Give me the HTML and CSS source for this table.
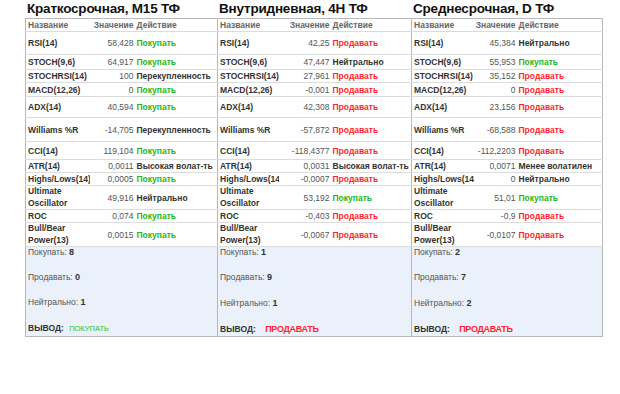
FILE: index.html
```html
<!DOCTYPE html>
<html lang="ru">
<head>
<meta charset="utf-8">
<link rel="stylesheet" href="styles.css">
</head>
<body>
<div class="board">
  <section class="panel p1">
    <h2 class="title">Краткосрочная, M15 ТФ</h2>
    <table class="tbl">
      <colgroup><col class="c-name"><col class="c-val"><col class="c-act"></colgroup>
      <tr class="hd"><th class="n">Название</th><th class="v">Значение</th><th class="a">Действие</th></tr>
      <tr class="r1"><td class="n">RSI(14)</td><td class="v">58,428</td><td class="a buy">Покупать</td></tr>
      <tr class="r2"><td class="n">STOCH(9,6)</td><td class="v">64,917</td><td class="a buy">Покупать</td></tr>
      <tr class="r3"><td class="n">STOCHRSI(14)</td><td class="v">100</td><td class="a neu">Перекупленность</td></tr>
      <tr class="r4"><td class="n">MACD(12,26)</td><td class="v">0</td><td class="a buy">Покупать</td></tr>
      <tr class="r5"><td class="n">ADX(14)</td><td class="v">40,594</td><td class="a buy">Покупать</td></tr>
      <tr class="r6"><td class="n">Williams %R</td><td class="v">-14,705</td><td class="a neu">Перекупленность</td></tr>
      <tr class="r7"><td class="n">CCI(14)</td><td class="v">119,104</td><td class="a buy">Покупать</td></tr>
      <tr class="r8"><td class="n">ATR(14)</td><td class="v">0,0011</td><td class="a neu">Высокая волат-ть</td></tr>
      <tr class="r9"><td class="n">Highs/Lows(14)</td><td class="v">0,0005</td><td class="a buy">Покупать</td></tr>
      <tr class="r10"><td class="n two">Ultimate Oscillator</td><td class="v">49,916</td><td class="a neu">Нейтрально</td></tr>
      <tr class="r11"><td class="n">ROC</td><td class="v">0,074</td><td class="a buy">Покупать</td></tr>
      <tr class="r12"><td class="n two">Bull/Bear Power(13)</td><td class="v">0,0015</td><td class="a buy">Покупать</td></tr>
      <tr class="sum"><td colspan="3">
        <div class="sum-box">
          <p>Покупать: <b>8</b></p>
          <p>Продавать: <b>0</b></p>
          <p>Нейтрально: <b>1</b></p>
          <p class="verdict">ВЫВОД: <span class="v-buy">ПОКУПАТЬ</span></p>
        </div>
      </td></tr>
    </table>
  </section>
  <section class="panel p2">
    <h2 class="title">Внутридневная, 4H ТФ</h2>
    <table class="tbl">
      <colgroup><col class="c-name"><col class="c-val"><col class="c-act"></colgroup>
      <tr class="hd"><th class="n">Название</th><th class="v">Значение</th><th class="a">Действие</th></tr>
      <tr class="r1"><td class="n">RSI(14)</td><td class="v">42,25</td><td class="a sell">Продавать</td></tr>
      <tr class="r2"><td class="n">STOCH(9,6)</td><td class="v">47,447</td><td class="a neu">Нейтрально</td></tr>
      <tr class="r3"><td class="n">STOCHRSI(14)</td><td class="v">27,961</td><td class="a sell">Продавать</td></tr>
      <tr class="r4"><td class="n">MACD(12,26)</td><td class="v">-0,001</td><td class="a sell">Продавать</td></tr>
      <tr class="r5"><td class="n">ADX(14)</td><td class="v">42,308</td><td class="a sell">Продавать</td></tr>
      <tr class="r6"><td class="n">Williams %R</td><td class="v">-57,872</td><td class="a sell">Продавать</td></tr>
      <tr class="r7"><td class="n">CCI(14)</td><td class="v">-118,4377</td><td class="a sell">Продавать</td></tr>
      <tr class="r8"><td class="n">ATR(14)</td><td class="v">0,0031</td><td class="a neu">Высокая волат-ть</td></tr>
      <tr class="r9"><td class="n">Highs/Lows(14</td><td class="v">-0,0007</td><td class="a sell">Продавать</td></tr>
      <tr class="r10"><td class="n two">Ultimate Oscillator</td><td class="v">53,192</td><td class="a buy">Покупать</td></tr>
      <tr class="r11"><td class="n">ROC</td><td class="v">-0,403</td><td class="a sell">Продавать</td></tr>
      <tr class="r12"><td class="n two">Bull/Bear Power(13)</td><td class="v">-0,0067</td><td class="a sell">Продавать</td></tr>
      <tr class="sum"><td colspan="3">
        <div class="sum-box">
          <p>Покупать: <b>1</b></p>
          <p>Продавать: <b>9</b></p>
          <p>Нейтрально: <b>1</b></p>
          <p class="verdict">ВЫВОД: <span class="v-sell">ПРОДАВАТЬ</span></p>
        </div>
      </td></tr>
    </table>
  </section>
  <section class="panel p3">
    <h2 class="title">Среднесрочная, D ТФ</h2>
    <table class="tbl">
      <colgroup><col class="c-name"><col class="c-val"><col class="c-act"></colgroup>
      <tr class="hd"><th class="n">Название</th><th class="v">Значение</th><th class="a">Действие</th></tr>
      <tr class="r1"><td class="n">RSI(14)</td><td class="v">45,384</td><td class="a neu">Нейтрально</td></tr>
      <tr class="r2"><td class="n">STOCH(9,6)</td><td class="v">55,953</td><td class="a buy">Покупать</td></tr>
      <tr class="r3"><td class="n">STOCHRSI(14)</td><td class="v">35,152</td><td class="a sell">Продавать</td></tr>
      <tr class="r4"><td class="n">MACD(12,26)</td><td class="v">0</td><td class="a sell">Продавать</td></tr>
      <tr class="r5"><td class="n">ADX(14)</td><td class="v">23,156</td><td class="a sell">Продавать</td></tr>
      <tr class="r6"><td class="n">Williams %R</td><td class="v">-68,588</td><td class="a sell">Продавать</td></tr>
      <tr class="r7"><td class="n">CCI(14)</td><td class="v">-112,2203</td><td class="a sell">Продавать</td></tr>
      <tr class="r8"><td class="n">ATR(14)</td><td class="v">0,0071</td><td class="a neu">Менее волатилен</td></tr>
      <tr class="r9"><td class="n">Highs/Lows(14</td><td class="v">0</td><td class="a neu">Нейтрально</td></tr>
      <tr class="r10"><td class="n two">Ultimate Oscillator</td><td class="v">51,01</td><td class="a buy">Покупать</td></tr>
      <tr class="r11"><td class="n">ROC</td><td class="v">-0,9</td><td class="a sell">Продавать</td></tr>
      <tr class="r12"><td class="n two">Bull/Bear Power(13)</td><td class="v">-0,0107</td><td class="a sell">Продавать</td></tr>
      <tr class="sum"><td colspan="3">
        <div class="sum-box">
          <p>Покупать: <b>2</b></p>
          <p>Продавать: <b>7</b></p>
          <p>Нейтрально: <b>2</b></p>
          <p class="verdict">ВЫВОД: <span class="v-sell">ПРОДАВАТЬ</span></p>
        </div>
      </td></tr>
    </table>
  </section>
</div>
</body>
</html>
```
FILE: styles.css
```css
html, body {
  margin: 0;
  padding: 0;
  background: #ffffff;
}
body {
  font-family: "Liberation Sans", Arial, sans-serif;
  color: #333;
}
.board {
  display: flex;
  padding-left: 25px;
}
.panel {
  display: flex;
  flex-direction: column;
}
.p1 { width: 192px; }
.p2 { width: 194px; }
.p3 { width: 192px; }
.title {
  margin: 0;
  height: 18px;
  line-height: 18px;
  font-size: 13.5px;
  letter-spacing: -0.2px;
  font-weight: bold;
  color: #111;
  padding-left: 2px;
  white-space: nowrap;
}
.tbl {
  width: 100%;
  table-layout: fixed;
  border-collapse: collapse;
  border-top: 1px solid #b8b8b8;
  border-bottom: 1px solid #b8b8b8;
  border-left: 1px solid #b8b8b8;
  font-size: 8.5px;
}
.p3 .tbl { border-right: 1px solid #b8b8b8; }
.p1 .c-name { width: 64px; }
.p1 .c-val { width: 46px; }
.p2 .c-name { width: 61px; }
.p2 .c-val { width: 53px; }
.p3 .c-name { width: 63px; }
.p3 .c-val { width: 43px; }
.tbl tr { border-bottom: 1px solid #dcdcdc; }
.tbl th, .tbl td {
  padding: 0;
  vertical-align: middle;
  white-space: nowrap;
  overflow: hidden;
  line-height: 12px;
}
.tbl th {
  font-weight: bold;
  color: #666;
  text-align: left;
}
.n { padding-left: 2px !important; font-weight: bold; color: #333; }
.tbl th.n { color: #666; }
.tbl td.two { white-space: normal; line-height: 11.5px; }
.v { text-align: right !important; padding-right: 2px !important; color: #555; }
.tbl th.v { color: #666; }
.a { padding-left: 1px !important; font-weight: bold; }
.neu { color: #333; }
.buy { color: #1cb71c; }
.sell { color: #ff1f2f; }
.hd { height: 12px; }
.r1 { height: 23px; }
.r2 { height: 15px; }
.r3 { height: 13px; }
.r4 { height: 14px; }
.r5 { height: 21px; }
.r6 { height: 24px; }
.r7 { height: 18px; }
.r8 { height: 13px; }
.r9 { height: 13px; }
.r10 { height: 24px; }
.r11 { height: 12px; }
.r12 { height: 21px; }
.tbl tr.sum { border-bottom: none; }
.tbl tr.sum td {
  background: #eaf1fa;
  vertical-align: top;
  white-space: nowrap;
}
.sum-box {
  height: 89px;
  display: flex;
  flex-direction: column;
  justify-content: space-between;
  padding: 0 2px 1px;
  box-sizing: border-box;
}
.sum-box p {
  margin: 0;
  font-size: 8.5px;
  line-height: 10px;
  color: #555;
}
.sum-box b { color: #333; font-size: 9px; }
.sum-box .verdict {
  font-weight: bold;
  font-size: 8.5px;
  line-height: 12px;
  color: #333;
}
.v-buy {
  color: #2cbf2c;
  font-weight: normal;
  font-size: 7.5px;
  margin-left: 3px;
}
.v-sell {
  color: #ff1f2f;
  font-weight: bold;
  font-size: 9px;
  letter-spacing: -0.3px;
  margin-left: 7px;
}
```
